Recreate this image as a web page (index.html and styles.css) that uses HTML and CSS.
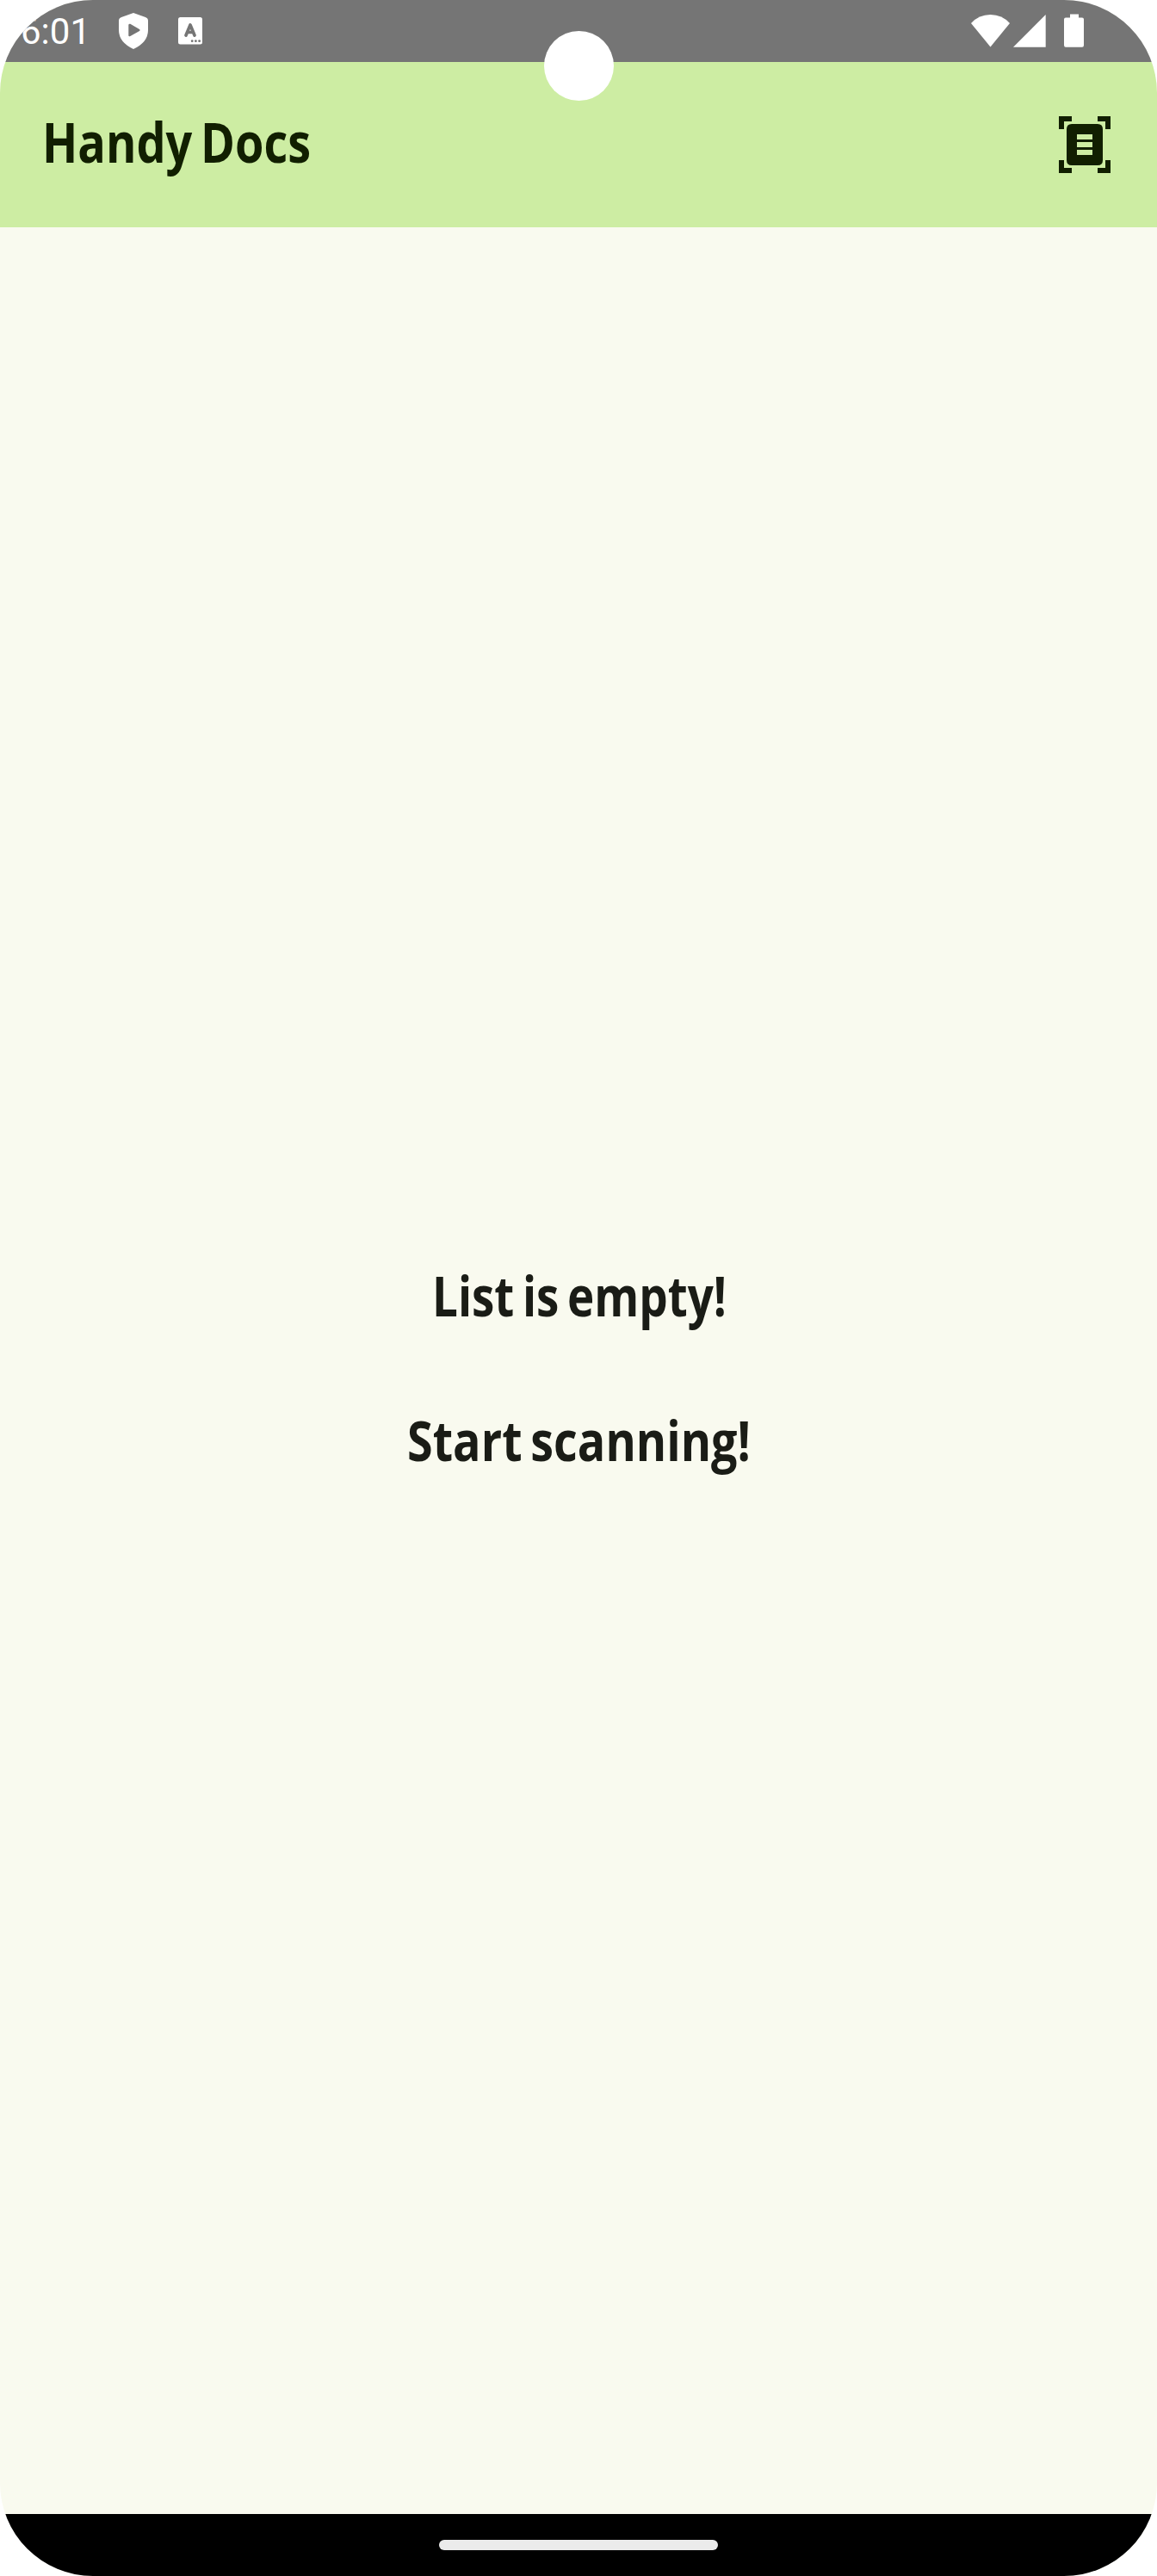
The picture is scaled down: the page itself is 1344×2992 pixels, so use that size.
FILE: index.html
```
<!DOCTYPE html>
<html lang="en">
<head>
<meta charset="utf-8">
<title>Handy Docs</title>
<link rel="stylesheet" href="styles.css">
</head>
<body>
<div class="screen">
  <header class="status">
    <span class="clock">6:01</span>
    <svg class="shield" width="34" height="42" viewBox="0 0 34 42"><path fill="#fff" fill-rule="evenodd" d="M17 0 L31 5 Q34 6 34 9 V20 Q34 34 17 42 Q0 34 0 20 V9 Q0 6 3 5Z M11.3 14 V26.300 Q11.500 28 13.300 27 L24 21 Q25.500 20 24 19 L13.300 12.800 Q11.500 12.300 11.300 14Z"/></svg>
    <svg class="letter" width="28" height="32" viewBox="0 0 28 32"><rect width="28" height="31.500" rx="2.500" fill="#fff"/><path d="M9 21 L14 9 L19 21 M11 17.500 H17" fill="none" stroke="#757575" stroke-width="3.700" stroke-linecap="round" stroke-linejoin="round"/><g fill="#757575"><circle cx="16.200" cy="27.700" r="1.400"/><circle cx="20.400" cy="27.700" r="1.400"/><circle cx="24.600" cy="27.700" r="1.400"/></g></svg>
    <svg class="signals" width="132" height="40" viewBox="0 0 132 40"><g fill="#fff"><path d="M0 11 Q9 1 22.500 1 Q36 1 45 11 L22.500 38.500Z"/><path d="M49 38.700 L86.700 1 V38.700Z"/><path d="M115 0.500 H125 V4.500 H129 Q131 4.500 131 6.500 V36.500 Q131 38.700 129 38.700 H110 Q108 38.700 108 36.500 V6.500 Q108 4.500 110 4.500 H115Z"/></g></svg>
  </header>
  <div class="appbar">
    <svg class="title" width="340" height="100"><text x="1" y="69" textLength="312" lengthAdjust="spacingAndGlyphs">Handy Docs</text></svg>
    <svg width="60" height="66" viewBox="0 0 60 66" shape-rendering="crispEdges"><path fill="#111f00" d="M0 0H15V6H6V15H0Z M45 0H60V15H54V6H45Z M0 51H6V60H15V66H0Z M54 51H60V66H45V60H54Z"/><path shape-rendering="auto" fill="#111f00" fill-rule="evenodd" d="M15 9H45Q51 9 51 15V51Q51 57 45 57H15Q9 57 9 51V15Q9 9 15 9Z M21 21V27H39V21Z M21 30V36H39V30Z M21 39V45H39V39Z"/></svg>
  </div>
  <main class="empty">
    <svg class="message" width="460" height="100"><text x="60" y="70" textLength="342" lengthAdjust="spacingAndGlyphs">List is empty!</text></svg>
    <svg class="message" width="460" height="100"><text x="31" y="70" textLength="399" lengthAdjust="spacingAndGlyphs">Start scanning!</text></svg>
  </main>
  <footer class="nav"><div class="handle"></div></footer>
  <div class="camera"></div>
</div>
</body>
</html>
```
FILE: styles.css
```
body {
  margin: 0;
  background: #fff;
}
.screen {
  position: relative;
  display: flex;
  flex-direction: column;
  width: 1344px;
  height: 2992px;
  border-radius: 108px;
  overflow: hidden;
  background: #f9faef;
}
.status {
  display: flex;
  align-items: flex-start;
  height: 72px;
  background: #757575;
}
.clock {
  width: 114px;
  padding-left: 24px;
  padding-top: 13px;
  font: 42px/48px Roboto, sans-serif;
  color: #fff;
}
.shield {
  margin-top: 15px;
}
.letter {
  margin: 20px 0 0 35px;
}
.signals {
  margin: 16px 84px 0 auto;
}
.appbar {
  display: flex;
  align-items: center;
  justify-content: space-between;
  height: 192px;
  padding: 0 54px 0 48px;
  box-sizing: border-box;
  background: #cdeda3;
}
.title {
  margin-top: 4px;
  fill: #111f00;
}
.title,
.message {
  overflow: visible;
}
.title text,
.message text {
  font: 700 64px "Open Sans", "Noto Sans", sans-serif;
  word-spacing: -5px;
}
.empty {
  flex: 1;
  display: flex;
  flex-direction: column;
  align-items: center;
  justify-content: center;
  gap: 68px;
  padding-top: 2px;
}
.message {
  fill: #1a1c16;
}
.nav {
  display: flex;
  align-items: center;
  justify-content: center;
  height: 72px;
  background: #000;
}
.handle {
  width: 324px;
  height: 12px;
  border-radius: 6px;
  background: #ebebeb;
}
.camera {
  position: absolute;
  left: 631.500px;
  top: 35.500px;
  width: 81px;
  height: 81px;
  border-radius: 50%;
  background: #fff;
}
```
